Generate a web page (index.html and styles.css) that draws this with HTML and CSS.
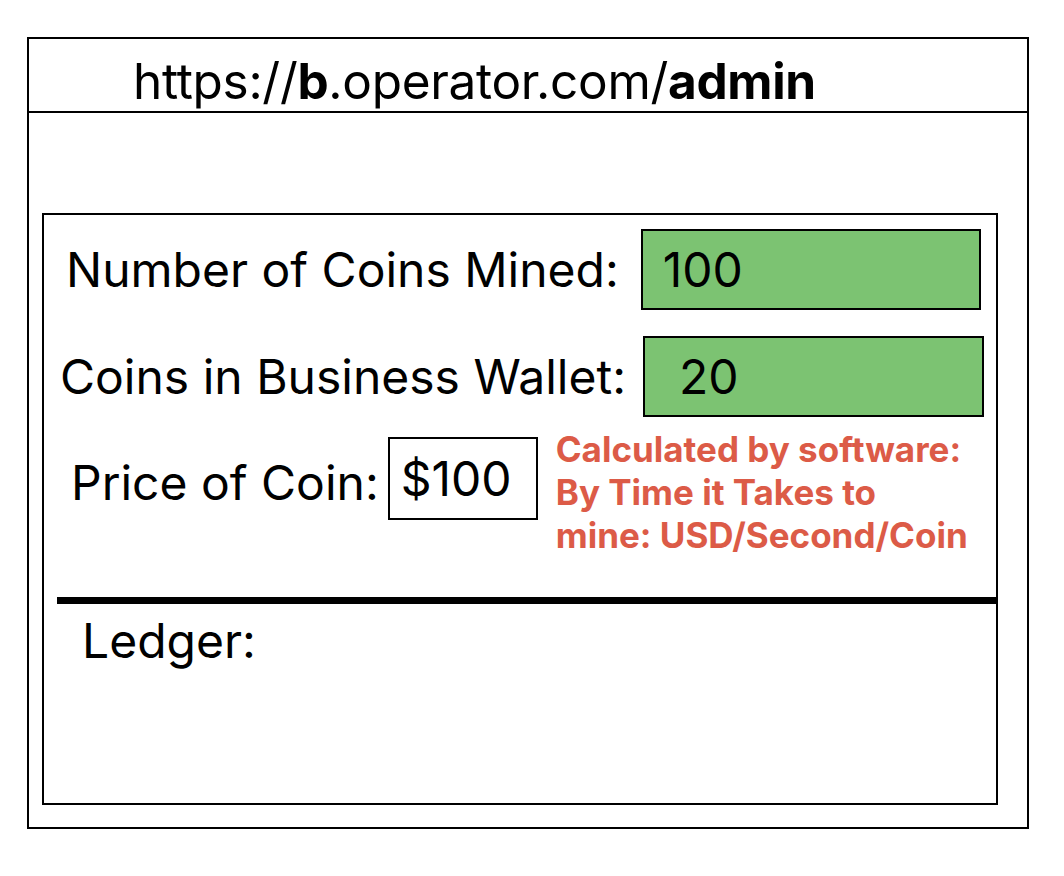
FILE: index.html
```html
<!DOCTYPE html>
<html>
<head>
  <meta charset="utf-8">
  <title>Admin</title>
  <link rel="stylesheet" href="styles.css">
</head>
<body>
  <div class="window">
    <div class="urlbar">https://<b>b</b>.operator.com/<b>admin</b></div>

    <div class="panel">
      <div class="row row-mined">
        <span class="label">Number of Coins Mined:</span>
        <div class="field field-green field-mined">100</div>
      </div>

      <div class="row row-wallet">
        <span class="label">Coins in Business Wallet:</span>
        <div class="field field-green field-wallet">20</div>
      </div>

      <div class="row row-price">
        <span class="label">Price of Coin:</span>
        <div class="field field-price">$100</div>
        <p class="note">Calculated by software:<br>By Time it Takes to<br>mine: USD/Second/Coin</p>
      </div>

      <div class="rule"></div>

      <div class="ledger">Ledger:</div>
    </div>
  </div>
</body>
</html>
```

FILE: styles.css
```css
body {
  margin: 0;
  background: #fff;
  color: #000;
  font-family: Inter, "Liberation Sans", sans-serif;
}

.window {
  box-sizing: border-box;
  width: 1002px;
  height: 792px;
  margin: 37px 0 0 27px;
  border: 2px solid #000;
}

.urlbar {
  box-sizing: border-box;
  height: 74px;
  padding: 13px 0 0 104px;
  border-bottom: 2px solid #000;
  font-size: 49.5px;
  line-height: 59px;
  letter-spacing: -0.3px;
  overflow: hidden;
}

.urlbar b {
  font-weight: 700;
}

.panel {
  box-sizing: border-box;
  width: 956px;
  height: 592px;
  margin: 100px 0 0 13px;
  border: 2px solid #000;
}

.row {
  display: flex;
  align-items: center;
}

.label {
  font-size: 48px;
  white-space: nowrap;
}

.field {
  box-sizing: border-box;
  height: 81px;
  border: 2px solid #000;
  font-size: 48px;
  line-height: 77px;
}

.field-green {
  background: #7cc372;
}

.row-mined {
  margin: 14px 0 0 22px;
  gap: 22px;
}

.field-mined {
  width: 340px;
  padding-left: 20px;
}

.row-wallet {
  margin: 26px 0 0 16px;
  gap: 17px;
}

.field-wallet {
  width: 341px;
  padding-left: 34px;
}

.row-price {
  align-items: flex-start;
  margin: 11px 0 0 27px;
}

.row-price .label {
  margin: 25px 9px 0 0;
}

.field-price {
  width: 150px;
  height: 83px;
  margin-top: 9px;
  padding-left: 11px;
  line-height: 79px;
}

.note {
  margin: 0 0 0 18px;
  color: #dc5b47;
  font-size: 35px;
  font-weight: 700;
  line-height: 43px;
  white-space: nowrap;
}

.rule {
  height: 7px;
  margin: 40px 0 0 13px;
  background: #000;
}

.ledger {
  margin: 7px 0 0 38px;
  font-size: 48px;
}
```
